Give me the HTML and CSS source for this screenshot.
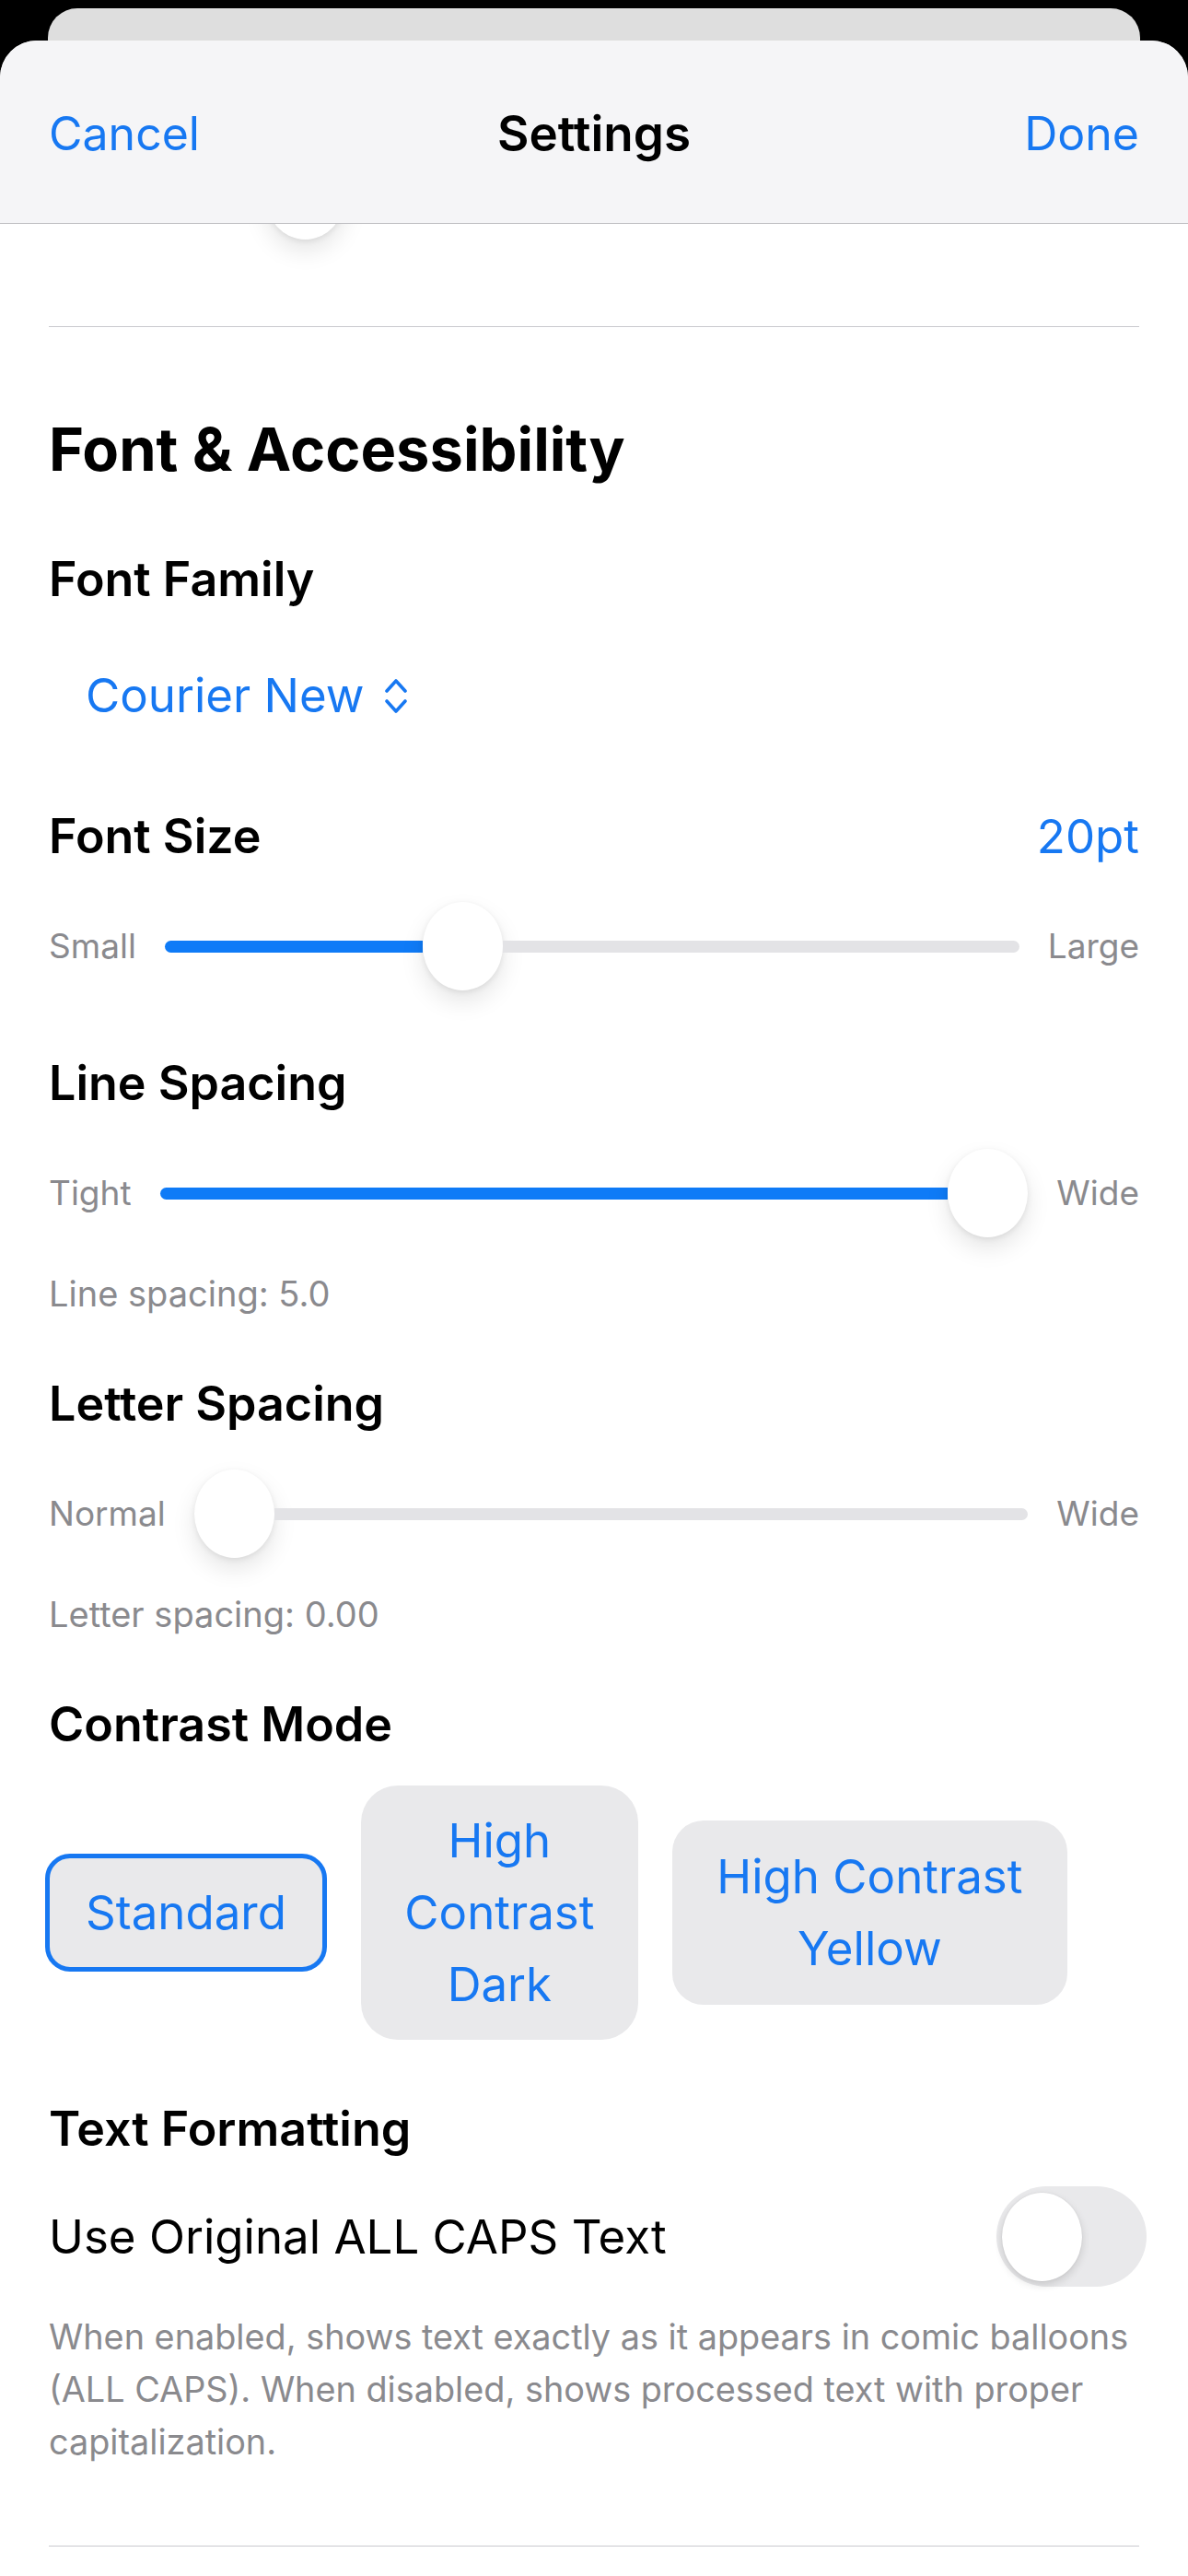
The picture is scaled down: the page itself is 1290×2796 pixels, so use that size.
FILE: index.html
```html
<!DOCTYPE html>
<html lang="en">
<head>
  <meta charset="UTF-8">
  <title>Settings</title>
  <link rel="stylesheet" href="styles.css">
</head>
<body class="settings-page">
  <div class="back-card"></div>

  <div class="sheet">
    <header class="nav-bar">
      <span class="nav-btn">Cancel</span>
      <h1 class="nav-title">Settings</h1>
      <span class="nav-btn nav-done">Done</span>
    </header>

    <main class="content">
      <!-- previous section, scrolled under the bar -->
      <div class="slider peek">
        <div class="track">
          <div class="fill" style="flex-grow: 0.214"></div>
          <div class="thumb"></div>
          <div class="rest" style="flex-grow: 0.786"></div>
        </div>
      </div>

      <hr class="divider">

      <h2 class="section-title">Font &amp; Accessibility</h2>

      <div class="group">
        <h3 class="field-label">Font Family</h3>
        <div class="picker">
          <span>Courier New</span>
          <svg class="picker-icon" width="28" height="45" viewBox="0 0 28 45">
            <path d="M4 17 L14 6 L24 17 M4 28 L14 39 L24 28" fill="none" stroke="currentColor" stroke-width="3.6" stroke-linecap="round" stroke-linejoin="round"/>
          </svg>
        </div>
      </div>

      <div class="group">
        <div class="label-row">
          <h3 class="field-label">Font Size</h3>
          <span class="value">20pt</span>
        </div>
        <div class="slider">
          <span class="end-label">Small</span>
          <div class="track">
            <div class="fill" style="flex-grow: 0.333"></div>
            <div class="thumb"></div>
            <div class="rest" style="flex-grow: 0.667"></div>
          </div>
          <span class="end-label">Large</span>
        </div>
      </div>

      <div class="group">
        <h3 class="field-label">Line Spacing</h3>
        <div class="slider">
          <span class="end-label">Tight</span>
          <div class="track">
            <div class="fill" style="flex-grow: 1"></div>
            <div class="thumb"></div>
            <div class="rest" style="flex-grow: 0"></div>
          </div>
          <span class="end-label">Wide</span>
        </div>
        <p class="caption">Line spacing: 5.0</p>
      </div>

      <div class="group">
        <h3 class="field-label">Letter Spacing</h3>
        <div class="slider">
          <span class="end-label">Normal</span>
          <div class="track">
            <div class="fill" style="flex-grow: 0"></div>
            <div class="thumb"></div>
            <div class="rest" style="flex-grow: 1"></div>
          </div>
          <span class="end-label">Wide</span>
        </div>
        <p class="caption">Letter spacing: 0.00</p>
      </div>

      <div class="group">
        <h3 class="field-label">Contrast Mode</h3>
        <div class="contrast-options">
          <button class="mode-btn mode-selected">Standard</button>
          <button class="mode-btn mode-dark">High Contrast Dark</button>
          <button class="mode-btn mode-yellow">High Contrast Yellow</button>
        </div>
      </div>

      <div class="group">
        <h3 class="field-label">Text Formatting</h3>
        <div class="toggle-row">
          <span class="toggle-text">Use Original ALL CAPS Text</span>
          <div class="toggle">
            <div class="knob"></div>
          </div>
        </div>
        <p class="note">When enabled, shows text exactly as it appears in comic balloons (ALL CAPS). When disabled, shows processed text with proper capitalization.</p>
      </div>

      <hr class="divider divider-bottom">
    </main>
  </div>
</body>
</html>
```

FILE: styles.css
```css
body.settings-page {
  margin: 0;
  background: #000000;
  font-family: Inter, "Noto Sans", sans-serif;
  color: #000000;
}

.back-card {
  height: 35px;
  margin: 9px 52px 0;
  background: #dedede;
  border-radius: 32px 32px 0 0;
}

.sheet {
  min-height: calc(100vh - 44px);
  background: #ffffff;
  border-radius: 40px 40px 0 0;
  overflow: hidden;
}

.nav-bar {
  position: relative;
  z-index: 2;
  box-sizing: border-box;
  height: 199px;
  padding: 3px 53px 0;
  display: grid;
  grid-template-columns: 1fr auto 1fr;
  align-items: center;
  background: #f5f5f7;
  border-bottom: 1px solid #bdbdc1;
}

.nav-btn {
  color: #1778f2;
  font-size: 50px;
}

.nav-done {
  justify-self: end;
}

.nav-title {
  margin: 0;
  font-size: 53px;
  font-weight: 600;
}

.content {
  display: flex;
  flex-direction: column;
  padding: 0 53px;
}

.divider {
  height: 1px;
  margin: 94px 0 0;
  border: none;
  background: #cacace;
}

.divider-bottom {
  margin-top: 84px;
}

.section-title {
  margin: 89px 0 0;
  font-size: 65px;
  font-weight: 700;
  line-height: 88px;
}

.group {
  display: flex;
  flex-direction: column;
  margin-top: 66px;
}

.field-label {
  margin: 0;
  font-size: 52px;
  font-weight: 600;
  line-height: 62px;
}

.label-row {
  display: flex;
  justify-content: space-between;
  align-items: center;
}

.value {
  color: #1778f2;
  font-size: 51px;
  line-height: 62px;
}

.picker {
  align-self: flex-start;
  display: flex;
  align-items: center;
  gap: 20px;
  margin: 64px 0 25px 40px;
  color: #1778f2;
  font-size: 51px;
  line-height: 62px;
}

/* slider: fill | thumb | rest, grow values set per slider */
.slider {
  display: flex;
  align-items: center;
  gap: 31px;
  height: 96px;
  margin: 40px 0 4px;
}

.slider.peek {
  margin: -79px 0 0;
}

.end-label {
  color: #8a8a8e;
  font-size: 37px;
  line-height: 46px;
}

.track {
  flex: 1;
  display: flex;
  align-items: center;
  height: 96px;
}

.fill,
.rest {
  flex-basis: 0;
  height: 13px;
}

.fill {
  background: #0f7bf7;
  border-radius: 7px 0 0 7px;
}

.rest {
  background: #e3e3e6;
  border-radius: 0 7px 7px 0;
}

.thumb {
  flex: none;
  width: 87px;
  height: 96px;
  background: #ffffff;
  border-radius: 50%;
  box-shadow: 0 12px 26px rgba(0, 0, 0, 0.1), 0 2px 6px rgba(0, 0, 0, 0.08);
}

.caption {
  margin: 34px 0 0;
  color: #8a8a8e;
  font-size: 38px;
  line-height: 46px;
}

.contrast-options {
  display: flex;
  align-items: center;
  gap: 37px;
  margin: 35px 0 0 -4px;
}

.mode-btn {
  box-sizing: border-box;
  padding: 21px 40px;
  border: none;
  border-radius: 40px;
  background: #e9e9eb;
  color: #1778f2;
  font-family: inherit;
  font-size: 51px;
  line-height: 78px;
  text-align: center;
}

.mode-selected {
  padding: 20px 39px;
  border: 5px solid #1778f2;
  border-radius: 27px;
}

.mode-dark {
  width: 301px;
}

.mode-yellow {
  width: 429px;
  padding: 22px 40px;
  border-radius: 34px;
}

.toggle-row {
  display: flex;
  justify-content: space-between;
  align-items: center;
  height: 109px;
  margin-top: 31px;
}

.toggle-text {
  font-size: 51px;
  line-height: 62px;
}

.toggle {
  box-sizing: border-box;
  display: flex;
  align-items: center;
  width: 163px;
  height: 109px;
  margin-right: -8px;
  padding: 0 6px;
  background: #e9e9eb;
  border-radius: 55px;
}

.knob {
  width: 87px;
  height: 96px;
  background: #ffffff;
  border-radius: 50%;
  box-shadow: 0 4px 10px rgba(0, 0, 0, 0.14), 0 0 2px rgba(0, 0, 0, 0.08);
}

.note {
  margin: 26px 0 0;
  color: #8a8a8e;
  font-size: 37.8px;
  line-height: 57px;
}
```
